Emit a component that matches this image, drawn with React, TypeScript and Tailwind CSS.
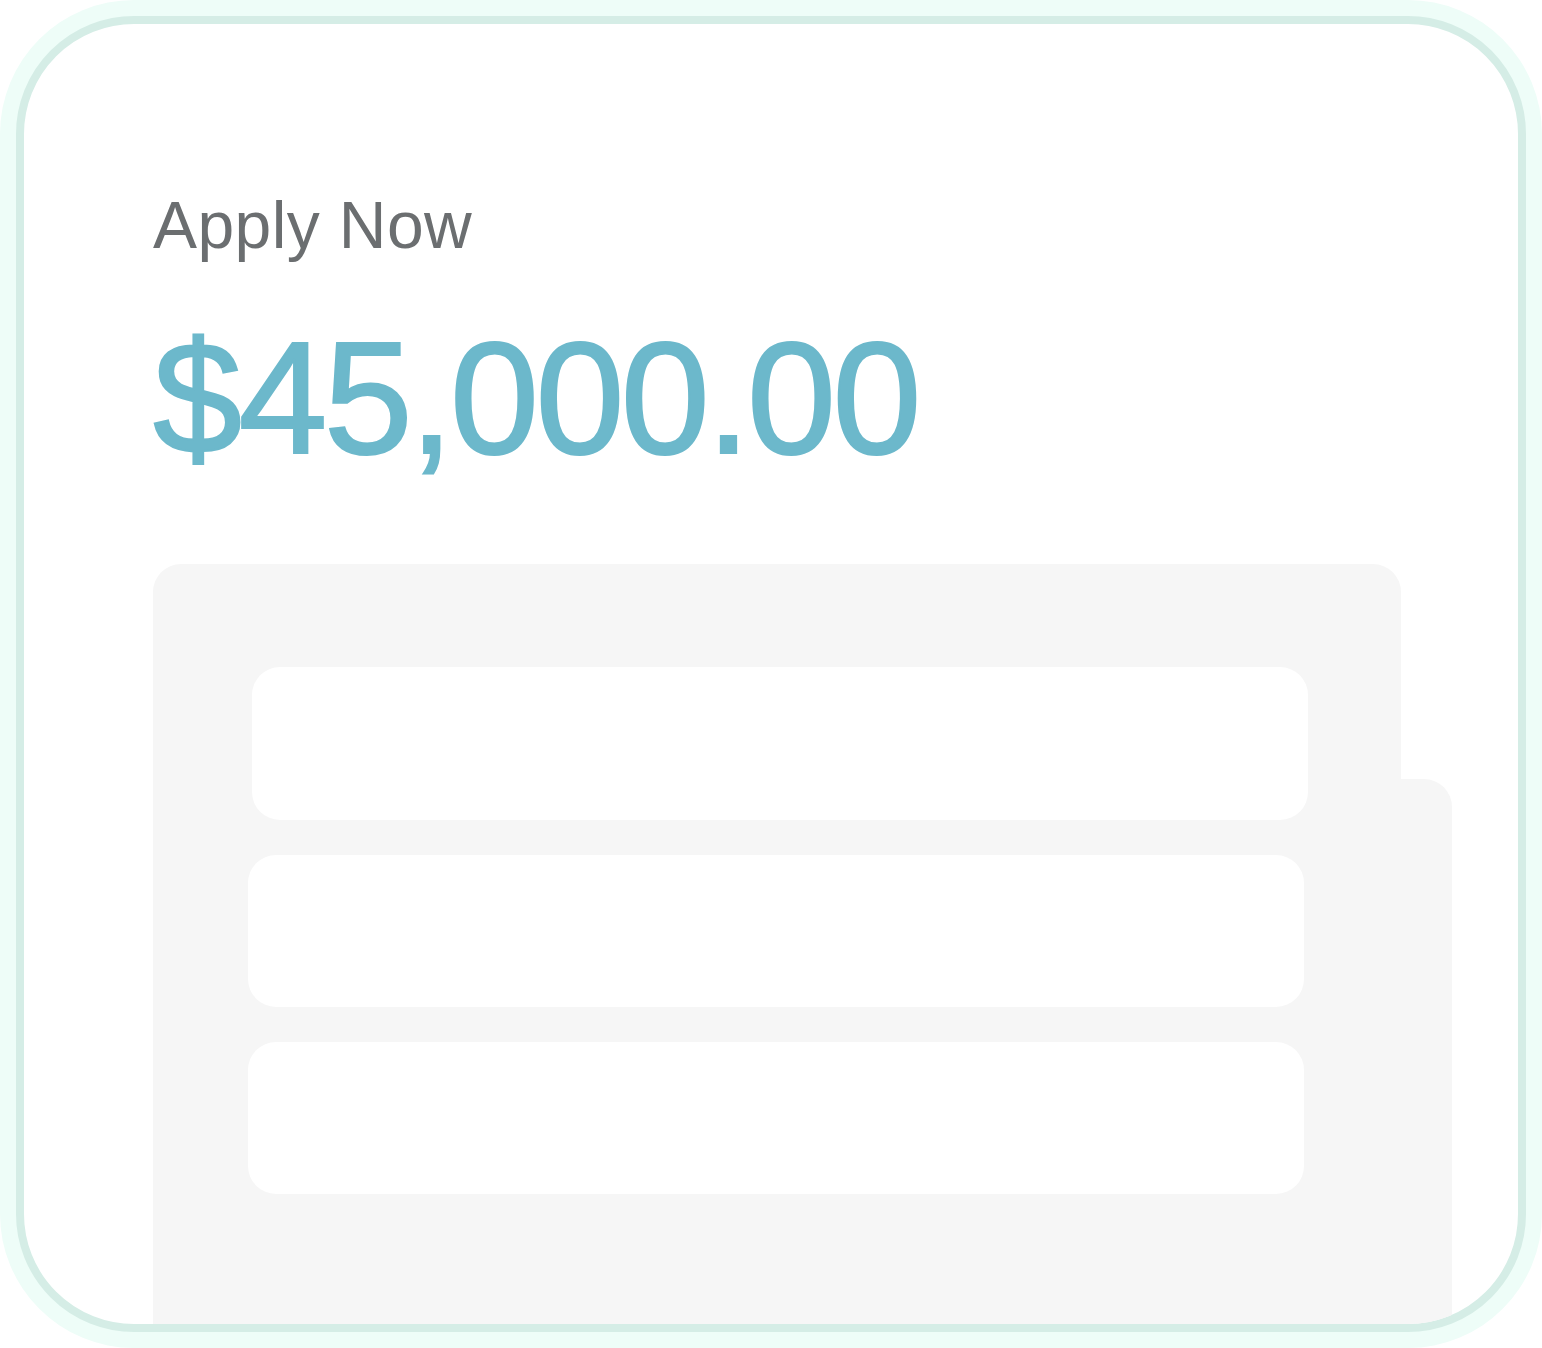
export default function App() {
  return (
    <div className="h-[1348px] w-[1542px] bg-white">
      <div className="h-full w-full rounded-[134px] bg-[#eefdf8] p-4">
        <div className="h-full w-full overflow-hidden rounded-[118px] border-8 border-[#d5ede6] bg-white">
          <div className="pl-[129px] pt-[168px] font-['Liberation_Sans',Arial,sans-serif]">
            <div className="text-[66px] leading-[66px] tracking-[0.4px] text-[#6b6e70]">Apply Now</div>
            <div className="mt-[62px] text-[160px] leading-[156px] tracking-[-3.6px] text-[#6cb8cb] [-webkit-text-stroke:2px_#6cb8cb]">
              $45,000.00
            </div>

            <div className="mt-[88px] flex items-start">
              <div className="h-[800px] w-[1248px] shrink-0 rounded-t-[28px] bg-[#f6f6f6] pt-[103px]">
                <div className="flex flex-col gap-[35px]">
                  <div className="ml-[99px] h-[153px] w-[1056px] rounded-[28px] bg-white" />
                  <div className="ml-[95px] h-[152px] w-[1056px] rounded-[28px] bg-white" />
                  <div className="ml-[95px] h-[152px] w-[1056px] rounded-[28px] bg-white" />
                </div>
              </div>
              <div className="mt-[215px] h-[600px] w-[51px] shrink-0 rounded-tr-[28px] bg-[#f6f6f6]" />
            </div>
          </div>
        </div>
      </div>
    </div>
  );
}
